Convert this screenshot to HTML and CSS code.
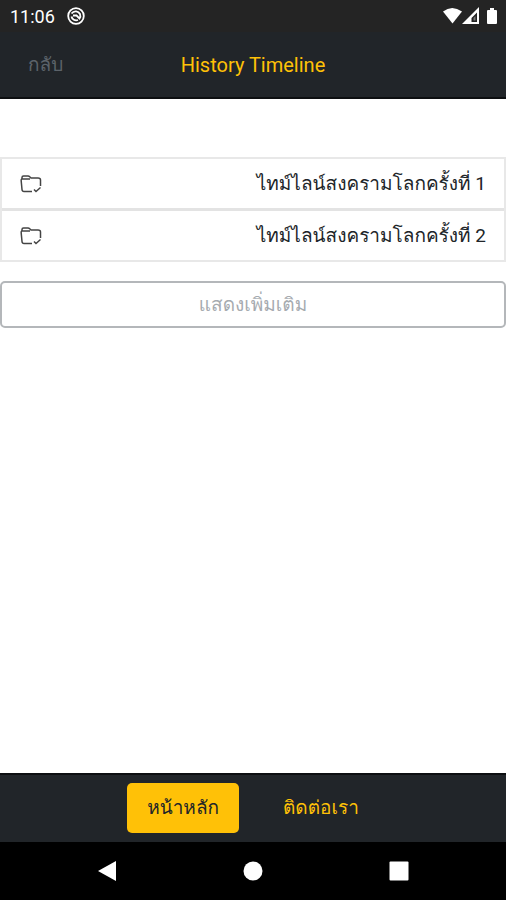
FILE: index.html
```html
<!DOCTYPE html>
<html lang="th">
<head>
    <meta charset="UTF-8">
    <title>History Timeline</title>
    <meta name="viewport" content="width=device-width, initial-scale=1.0">
    <link rel="stylesheet" href="styles.css">
</head>
<body>
    <div class="status-bar">
        <span class="clock">11:06</span>
        <svg class="app-icon" width="18" height="18" viewBox="0 0 18 18" fill="none" stroke="#fff">
            <circle cx="9" cy="9" r="7.8" stroke-width="1.8"/>
            <path d="M4.500 6.500C7 3.200 11.500 3.800 13 7 13.800 9 13.200 10.500 12.500 11.500L9.500 8.500H6" stroke-width="1.800"/>
            <path d="M4.500 9.500C5 12.500 8 14 11 13" stroke-width="1.800"/>
        </svg>
        <div class="status-icons">
            <svg width="56" height="18" viewBox="0 0 56 18" fill="#fff">
                <path d="M1 4.500Q10 -2.500 20 4.500L10.500 16.500Z"/>
                <path fill-rule="evenodd" d="M37 0V17H20ZM35 5.500L29.500 11V15H35Z"/>
                <path d="M31.500 11L33.500 9V13.500H31.500Z" fill="#777"/>
                <path d="M48 1H52V3H54Q55 3 55 4V16Q55 17 54 17H46Q45 17 45 16V4Q45 3 46 3H48Z"/>
            </svg>
        </div>
    </div>

    <header class="header">
        <button class="back-btn" type="button">กลับ</button>
        <h1 class="title">History Timeline</h1>
    </header>

    <main class="content">
        <ul class="timeline-list">
            <li>
                <a class="timeline-item" href="#ww1">
                    <svg class="folder" viewBox="0 0 22 18">
                        <path d="M2 4.500V2.500Q2 1 3.500 1H8Q9 1 10 2L11 3H18Q20.500 3 20.500 5V11M2 4H10M2 4Q1 4 1.200 6L2 14.500Q2.200 16.500 4 16.500H12"/>
                        <path d="M14 14.500L16 16.500L20.500 12.500"/>
                    </svg>
                    <span>ไทม์ไลน์สงครามโลกครั้งที่ 1</span>
                </a>
            </li>
            <li>
                <a class="timeline-item" href="#ww2">
                    <svg class="folder" viewBox="0 0 22 18">
                        <path d="M2 4.500V2.500Q2 1 3.500 1H8Q9 1 10 2L11 3H18Q20.500 3 20.500 5V11M2 4H10M2 4Q1 4 1.200 6L2 14.500Q2.200 16.500 4 16.500H12"/>
                        <path d="M14 14.500L16 16.500L20.500 12.500"/>
                    </svg>
                    <span>ไทม์ไลน์สงครามโลกครั้งที่ 2</span>
                </a>
            </li>
        </ul>
        <button class="more-btn" type="button">แสดงเพิ่มเติม</button>
    </main>

    <nav class="tabs">
        <a class="tab active" href="#home">หน้าหลัก</a>
        <a class="tab" href="#contact">ติดต่อเรา</a>
    </nav>

    <div class="system-nav">
        <button type="button" aria-label="Back">
            <svg width="20" height="22" viewBox="0 0 20 22"><path d="M19 1V21L1 11Z"/></svg>
        </button>
        <button type="button" aria-label="Home">
            <svg width="20" height="22" viewBox="0 0 20 22"><circle cx="10" cy="11" r="9.500"/></svg>
        </button>
        <button type="button" aria-label="Recent apps">
            <svg width="20" height="22" viewBox="0 0 20 22"><rect x="0.500" y="1.500" width="19" height="19" rx="1"/></svg>
        </button>
    </div>
</body>
</html>
```

FILE: styles.css
```css
* {
    box-sizing: border-box;
}

body {
    margin: 0;
    min-height: 100vh;
    display: flex;
    flex-direction: column;
    background: #fff;
    color: #212529;
    font-family: Roboto, Loma, Waree, Garuda, "Noto Sans Thai Looped", "Noto Sans Thai", sans-serif;
    font-size: 19px;
}

button {
    font: inherit;
    cursor: pointer;
}

a {
    color: inherit;
    text-decoration: none;
}

.status-bar {
    display: flex;
    align-items: center;
    height: 32px;
    padding: 0 8px 0 10px;
    background: #242424;
    color: #fff;
}

.clock {
    font-size: 18px;
}

.app-icon {
    margin-left: 12px;
}

.status-icons {
    display: flex;
    margin-left: auto;
}

.header {
    display: grid;
    grid-template-columns: 1fr auto 1fr;
    align-items: center;
    height: 67px;
    padding: 0 28px;
    background: #212529;
    border-bottom: 2px solid #0d0f11;
}

.back-btn {
    justify-self: start;
    padding: 0;
    border: none;
    background: none;
    line-height: 24px;
    color: #5c636a;
}

.title {
    margin: 0;
    font-size: 20px;
    font-weight: 400;
    line-height: 24px;
    color: #ffc107;
}

.content {
    flex: 1;
    padding-top: 58px;
}

.timeline-list {
    margin: 0 0 19px;
    padding: 0;
    list-style: none;
    border: 2px solid #e8e8e8;
}

.timeline-list li + li {
    border-top: 3px solid #e3e3e3;
}

.timeline-item {
    display: flex;
    justify-content: space-between;
    align-items: center;
    height: 49px;
    padding: 0 18px;
    line-height: 24px;
}

.folder {
    width: 22px;
    height: 18px;
    fill: none;
    stroke: #444;
    stroke-width: 1.5;
}

.more-btn {
    display: block;
    width: 100%;
    height: 47px;
    border: 2px solid #b4b7ba;
    border-radius: 5px;
    background: #fff;
    line-height: 24px;
    color: #a6abb0;
}

.tabs {
    display: flex;
    justify-content: center;
    align-items: center;
    gap: 24px;
    height: 69px;
    padding: 0 0 2px;
    background: #212529;
    border-top: 2px solid #0d0f11;
}

.tab {
    padding: 0 20px;
    border-radius: 5px;
    line-height: 50px;
    color: #ffc107;
}

.tab.active {
    background: #ffc107;
    color: #212529;
}

.system-nav {
    display: flex;
    justify-content: center;
    align-items: center;
    gap: 126px;
    height: 58px;
    background: #000;
}

.system-nav button {
    display: flex;
    padding: 0;
    border: none;
    background: none;
}

.system-nav svg {
    fill: #fff;
}
```
